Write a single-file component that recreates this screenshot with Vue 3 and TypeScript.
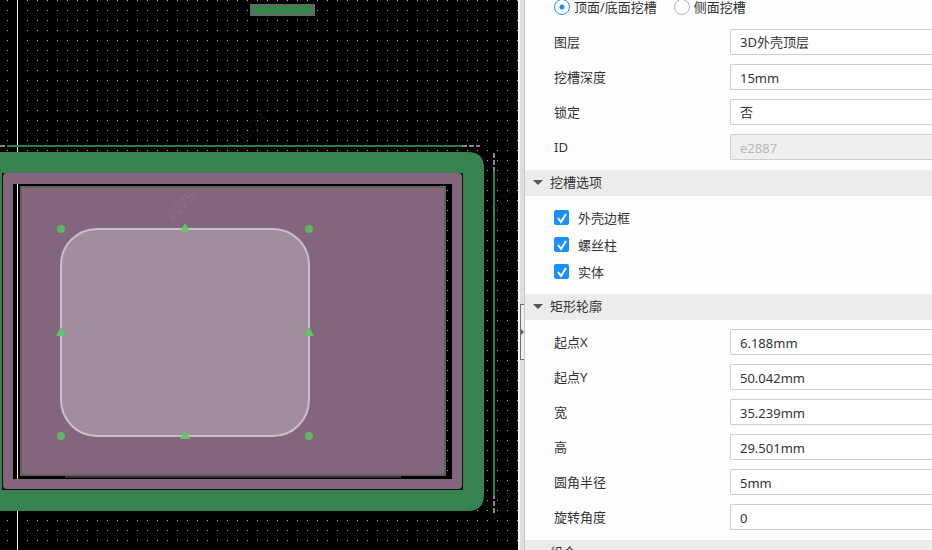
<script setup lang="ts">
import { reactive, ref } from 'vue'

interface Field {
  id: string
  label: string
  value: string
  kind: 'text' | 'select'
  disabled?: boolean
}

const face = ref<'top' | 'side'>('top')

const general = reactive<Field[]>([
  { id: 'layer', label: '图层', value: '3D外壳顶层', kind: 'select' },
  { id: 'depth', label: '挖槽深度', value: '15mm', kind: 'text' },
  { id: 'locked', label: '锁定', value: '否', kind: 'select' },
  { id: 'uid', label: 'ID', value: 'e2887', kind: 'text', disabled: true },
])

const options = reactive([
  { id: 'border', label: '外壳边框', checked: true },
  { id: 'pillar', label: '螺丝柱', checked: true },
  { id: 'solid', label: '实体', checked: true },
])

const outline = reactive<Field[]>([
  { id: 'startx', label: '起点X', value: '6.188mm', kind: 'text' },
  { id: 'starty', label: '起点Y', value: '50.042mm', kind: 'text' },
  { id: 'width', label: '宽', value: '35.239mm', kind: 'text' },
  { id: 'height', label: '高', value: '29.501mm', kind: 'text' },
  { id: 'radius', label: '圆角半径', value: '5mm', kind: 'text' },
  { id: 'angle', label: '旋转角度', value: '0', kind: 'text' },
])

const corners = [[61, 229], [309, 229], [61, 436], [309, 436]]
const mids = [[185, 228], [185, 435], [61, 332], [309, 332]]
</script>

<template>
  <div class="editor">
    <main class="canvas">
      <svg class="drawing" aria-hidden="true">
        <defs>
          <pattern id="grid" width="10" height="10" patternUnits="userSpaceOnUse">
            <rect x="7" y="0" width="1" height="1" fill="#b4b4b4" />
          </pattern>
        </defs>
        <rect width="100%" height="100%" fill="#000" />
        <rect width="100%" height="100%" fill="url(#grid)" />
        <rect x="17" width="1" height="100%" fill="#f4f4f4" />

        <rect x="251" y="5" width="63" height="10" fill="#36854f" stroke="#666" stroke-width="2" />

        <!-- dimension lines -->
        <path d="M7 146H462M494 171V496" fill="none" stroke="#2f7d4b" stroke-width="2" />
        <path d="M462 146H480M494 153V171M494 513V496M0 146H7" fill="none" stroke="#8b8387" stroke-width="2" stroke-dasharray="5 2" />

        <!-- shell body -->
        <path
          fill="#36834f"
          fill-rule="evenodd"
          d="M-10 152H468Q484 152 484 168V495Q484 511 468 511H-10ZM2 173V490H463V173Z"
        />
        <rect x="2" y="173" width="461" height="317" fill="#150d13" />
        <rect x="3" y="173" width="459" height="316" rx="4" fill="#83667e" />
        <rect x="13" y="184" width="439" height="295" fill="#000" />
        <rect x="13" y="184" width="439" height="295" fill="url(#grid)" />
        <rect x="17" y="184" width="1" height="295" fill="#f4f4f4" />
        <path d="M65 477H401" stroke="#666" stroke-width="1" />
        <rect x="21" y="187" width="424" height="288" fill="#83667e" stroke="#63605f" stroke-width="2" />

        <!-- selected slot -->
        <rect x="61" y="229" width="248" height="207" rx="36" fill="#a18d9d" stroke="#c9bfc8" stroke-width="2" />
        <circle v-for="c in corners" :key="`c${c[0]}-${c[1]}`" :cx="c[0]" :cy="c[1]" r="4" fill="#60b562" />
        <path v-for="m in mids" :key="`m${m[0]}-${m[1]}`" :d="`M${m[0]} ${m[1] - 5}L${m[0] + 5} ${m[1] + 4}H${m[0] - 5}Z`" fill="#66c469" />

        <!-- faint date stamps -->
        <g class="stamp">
          <text transform="translate(172 222) rotate(-45)">2025-</text>
          <text transform="translate(232 155) rotate(-45)">0:00:23</text>
          <text transform="translate(494 218) rotate(-45)">2025</text>
          <text transform="translate(494 520) rotate(-45)">2025</text>
        </g>
      </svg>
    </main>

    <div class="splitter">
      <button class="collapse" type="button" aria-label="收起">
        <svg width="4" height="10" viewBox="0 0 4 10"><path d="M0 1L4 5L0 9Z" fill="#655b60" /></svg>
      </button>
    </div>

    <aside class="panel">
      <div class="fields first">
        <div class="radios">
          <label><input v-model="face" type="radio" name="face" value="top" />顶面/底面挖槽</label>
          <label><input v-model="face" type="radio" name="face" value="side" />侧面挖槽</label>
        </div>
        <div v-for="f in general" :key="f.id" class="field">
          <label :for="f.id">{{ f.label }}</label>
          <select v-if="f.kind === 'select'" :id="f.id" v-model="f.value" class="control">
            <option>{{ f.value }}</option>
          </select>
          <input v-else :id="f.id" v-model="f.value" class="control" type="text" :disabled="f.disabled" />
        </div>
      </div>

      <button class="heading" type="button">
        <svg class="caret" viewBox="0 0 10 6"><path d="M0 0H10L5 5Z" /></svg>挖槽选项
      </button>
      <div class="checks">
        <label v-for="o in options" :key="o.id" class="check">
          <input v-model="o.checked" type="checkbox" />
          <svg class="tick" viewBox="0 0 15 15"><path d="M4 8L7 12L12 4" /></svg>
          <span>{{ o.label }}</span>
        </label>
      </div>

      <button class="heading" type="button">
        <svg class="caret" viewBox="0 0 10 6"><path d="M0 0H10L5 5Z" /></svg>矩形轮廓
      </button>
      <div class="fields">
        <div v-for="f in outline" :key="f.id" class="field">
          <label :for="f.id">{{ f.label }}</label>
          <input :id="f.id" v-model="f.value" class="control" type="text" />
        </div>
      </div>

      <button class="heading" type="button">
        <svg class="caret" viewBox="0 0 10 6"><path d="M0 0H10L5 5Z" /></svg>组合
      </button>
    </aside>
  </div>
</template>

<style>
body {
  margin: 0;
  overflow: hidden;
}
</style>

<style scoped>
.editor {
  display: flex;
  height: 100vh;
  overflow: hidden;
  background: #fff;
  color: #333;
  font: 13px/20px "Noto Sans", "Noto Sans CJK SC", sans-serif;
}
.canvas {
  flex: 1;
  min-width: 0;
  background: #000;
}
.drawing {
  display: block;
  width: 100%;
  height: 100%;
}
.stamp {
  fill: #fff;
  fill-opacity: 0.08;
  font-size: 15px;
}
.splitter {
  display: flex;
  align-items: center;
  box-sizing: border-box;
  width: 7px;
  padding-top: 114px;
  border-left: 2px solid #f6f6f6;
  border-right: 1px solid #c8c8c8;
  background: #dedede;
}
.collapse {
  display: flex;
  align-items: center;
  justify-content: flex-end;
  box-sizing: border-box;
  width: 4px;
  height: 56px;
  padding: 0;
  border: 1px solid #7a6a70;
  border-right: 0;
  background: #eee;
}
.panel {
  flex: 0 0 407px;
  overflow: hidden;
  background: #fefefe;
}
.fields {
  display: grid;
  gap: 9px;
  padding: 9px 0 10px 29px;
}
.first {
  margin-top: -6px;
  padding-top: 0;
}
.radios {
  display: flex;
  gap: 17px;
  height: 26px;
}
.radios label {
  display: flex;
  align-items: center;
  gap: 4px;
}
.radios input {
  appearance: none;
  box-sizing: border-box;
  width: 16px;
  height: 16px;
  margin: 0;
  border: 1px solid #b5b5b5;
  border-radius: 50%;
  background: #fff;
}
.radios input:checked {
  border-color: #1e8bf5;
  background: radial-gradient(circle, #1e8bf5 2px, #fff 3px);
}
.field {
  display: grid;
  grid-template-columns: 176px 1fr;
  align-items: center;
}
.control {
  appearance: none;
  box-sizing: border-box;
  width: 100%;
  height: 26px;
  margin: 0;
  padding: 1px 9px 0;
  border: 1px solid #cfcfcf;
  border-right: 0;
  border-radius: 2px 0 0 2px;
  background: #fff;
  color: #333;
  font: inherit;
}
select.control {
  padding: 0 9px 1px;
}
.control:disabled {
  background: #efefef;
  color: #b9b9b9;
}
.heading {
  display: flex;
  align-items: center;
  gap: 7px;
  width: 100%;
  height: 26px;
  padding: 0 8px 2px;
  border: 0;
  background: #ececec;
  color: #333;
  font: inherit;
}
.caret {
  width: 10px;
  height: 6px;
  margin-top: 2px;
  fill: #555;
}
.checks {
  padding: 8px 0 9px 29px;
}
.check {
  display: grid;
  grid-template-columns: 15px 1fr;
  align-items: center;
  column-gap: 9px;
  height: 27px;
}
.check input,
.tick {
  grid-area: 1 / 1;
  width: 15px;
  height: 15px;
  margin: 0;
}
.check input {
  appearance: none;
  box-sizing: border-box;
  border: 1px solid #b5b5b5;
  border-radius: 2px;
}
.check input:checked {
  border-color: #1890ff;
  background: #1890ff;
}
.tick {
  fill: none;
  stroke: #fff;
  stroke-width: 2;
  pointer-events: none;
}
</style>
